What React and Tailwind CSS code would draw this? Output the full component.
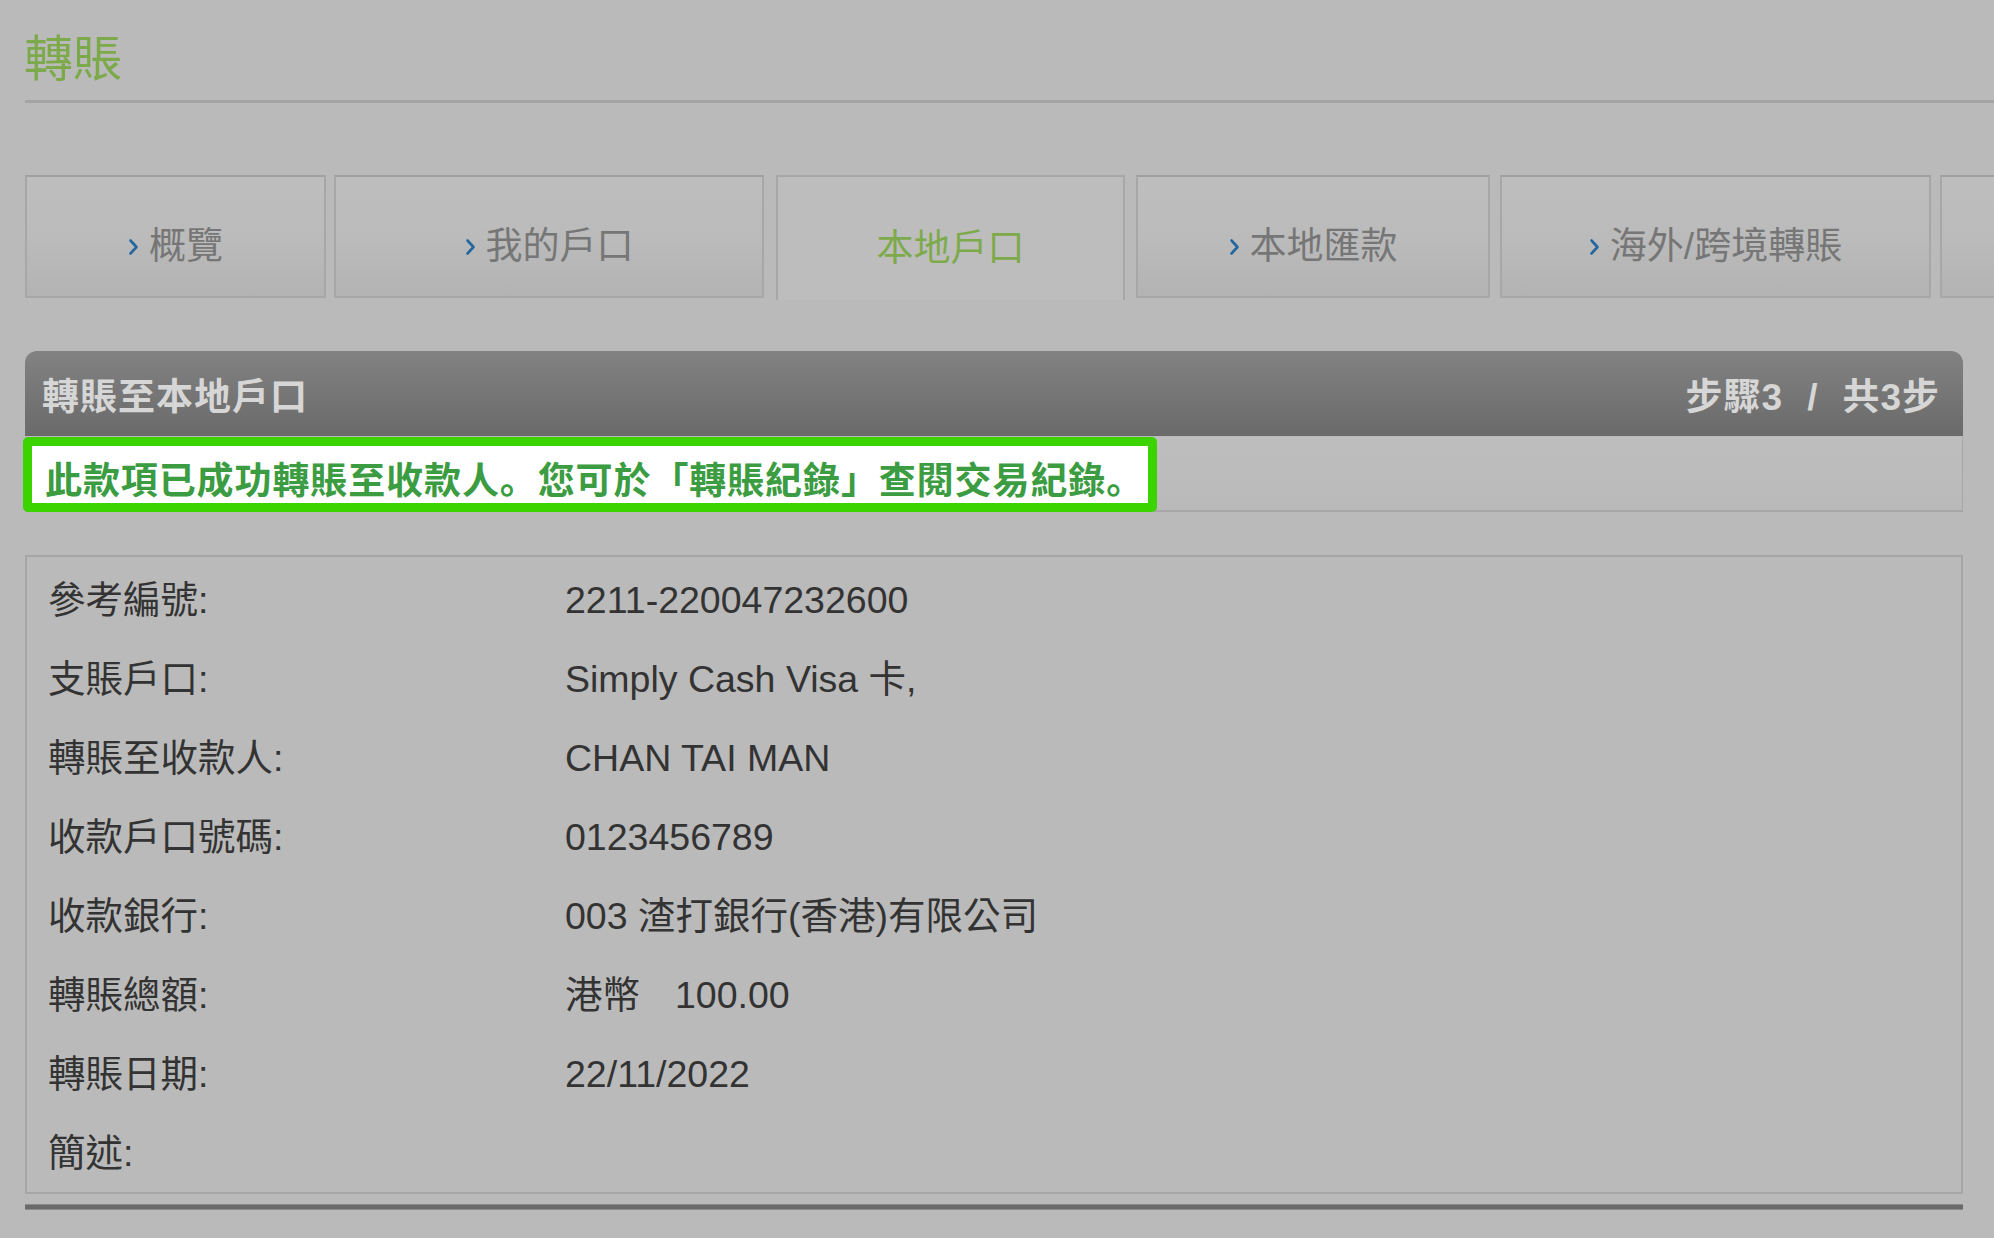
import React from "react";

const FONT = { fontFamily: '"Liberation Sans", "Noto Sans CJK TC", sans-serif' };
const SC = { fontFamily: '"Noto Sans CJK SC", sans-serif' };

function Chevron() {
  return (
    <svg width="11" height="18" viewBox="0 0 11 18" className="mr-[10px] shrink-0">
      <polyline points="2.5,2.5 8.5,9 2.5,15.5" fill="none" stroke="#2466a0" strokeWidth="2.6" strokeLinecap="round" strokeLinejoin="round" />
    </svg>
  );
}

function Tab({ label, width, ml, active }) {
  if (active) {
    return (
      <div
        className={`${width} ${ml} h-[125px] shrink-0 border-[2px] border-b-0 border-[#a7a7a7] bg-[#bdbdbd] flex items-center justify-center pt-[21px]`}
      >
        <span className="text-[37px] leading-[44px] text-[#7daa4a]">{label}</span>
      </div>
    );
  }
  return (
    <div
      className={`${width} ${ml} h-[123px] shrink-0 border-[2px] border-[#a7a7a7] border-t-[#a0a0a0] bg-gradient-to-b from-[#bebebe] via-[#bbbbbb] to-[#b3b3b3] flex items-center justify-center pt-[21px]`}
    >
      {label && (
        <>
          <Chevron />
          <span className="text-[37px] leading-[44px] text-[#767676]">{label}</span>
        </>
      )}
    </div>
  );
}

const rows = [
  ["參考編號:", "2211-220047232600"],
  ["支賬戶口:", "Simply Cash Visa 卡,"],
  ["轉賬至收款人:", "CHAN TAI MAN"],
  ["收款戶口號碼:", "0123456789"],
  ["收款銀行:", "003 渣打銀行(香港)有限公司"],
  ["轉賬總額:", "AMOUNT"],
  ["轉賬日期:", "22/11/2022"],
  ["簡述:", ""],
];

export default function App() {
  return (
    <div className="w-full min-h-[1238px] overflow-hidden bg-[#bababa] pl-[25px]" style={FONT}>
      {/* Title */}
      <div className="h-[103px] border-b-[3px] border-[#a4a4a4] pt-[35px]">
        <div className="text-[49px] leading-[49px] text-[#7caa4a] -ml-[1px]">轉賬</div>
      </div>

      {/* Tabs */}
      <div className="mt-[72px] flex items-start">
        <Tab label="概覽" width="w-[301px]" ml="ml-0" />
        <Tab label="我的戶口" width="w-[430px]" ml="ml-[8px]" />
        <Tab label="本地戶口" width="w-[349px]" ml="ml-[12px]" active />
        <Tab label="本地匯款" width="w-[354px]" ml="ml-[11px]" />
        <Tab label="海外/跨境轉賬" width="w-[431px]" ml="ml-[10px]" />
        <Tab label="" width="w-[300px]" ml="ml-[9px]" />
      </div>

      <div className="mr-[31px]">
        {/* Section header */}
        <div className="mt-[51px] h-[85px] rounded-t-[12px] bg-gradient-to-b from-[#828282] to-[#6a6a6a] flex items-center justify-between pl-[17px] pr-[23px] pt-[8px]">
          <span className="text-[37px] leading-[44px] font-bold tracking-[1px] text-[#d6d6d6]">轉賬至本地戶口</span>
          <span className="text-[37px] leading-[44px] font-bold tracking-[1px] text-[#d6d6d6] flex items-center">
            <span>步驟3</span>
            <span className="mx-[24px]">/</span>
            <span>共3步</span>
          </span>
        </div>

        {/* Success row */}
        <div className="h-[75px] border-b-[2px] border-r-[1px] border-[#a6a6a6] bg-gradient-to-b from-[#bebebe] to-[#b9b9b9]">
          <div className="-ml-[2px] mt-[1px] w-[1134px] h-[75px] rounded-[5px] border-[9px] border-[#3cd400] bg-white flex items-center pl-[13px] pt-[11px]">
            <span className="text-[37px] leading-[44px] font-bold tracking-[0.9px] text-[#3b9c42] whitespace-nowrap">
              此款項已成功轉賬至收款人<span style={SC}>。</span>您可於「轉賬紀錄」查閱交易紀錄<span style={SC}>。</span>
            </span>
          </div>
        </div>

        {/* Details */}
        <div className="mt-[43px] border-[2px] border-[#a6a6a6] pt-[3px]">
          {rows.map(([label, value]) => (
            <div key={label} className="h-[79px] flex items-center pl-[21px] text-[37.5px] leading-[44px] text-[#333333]">
              <span className="w-[517px] shrink-0">{label}</span>
              {value === "AMOUNT" ? (
                <span className="flex">
                  <span>港幣</span>
                  <span className="ml-[35px]">100.00</span>
                </span>
              ) : (
                <span className="whitespace-nowrap">{value}</span>
              )}
            </div>
          ))}
        </div>

        {/* Bottom line */}
        <div className="mt-[10px] h-[6px] bg-[#6a6a6a] border-y border-[#8a8a8a]" />
      </div>
    </div>
  );
}
